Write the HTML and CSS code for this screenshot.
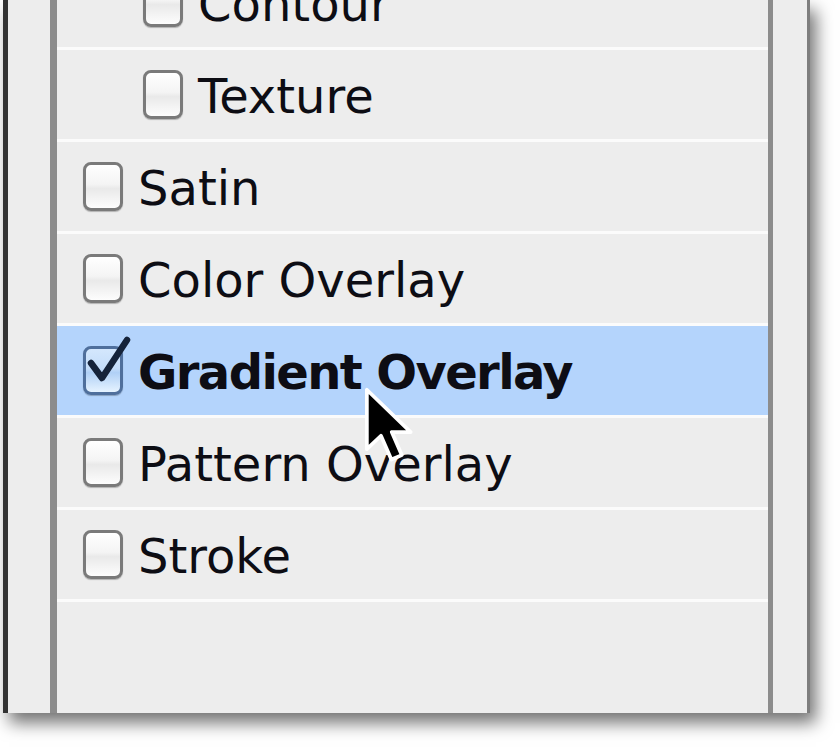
FILE: index.html
```html
<!DOCTYPE html>
<html>
<head>
<meta charset="utf-8">
<link rel="stylesheet" href="styles.css">
</head>
<body>
<div class="window">
  <div class="list">
    <div class="row nested"><span class="cb"></span><span class="label">Contour</span></div>
    <div class="row nested"><span class="cb"></span><span class="label">Texture</span></div>
    <div class="row"><span class="cb"></span><span class="label">Satin</span></div>
    <div class="row"><span class="cb"></span><span class="label">Color Overlay</span></div>
    <div class="row selected">
      <span class="cb checked">
        <svg class="check" width="50" height="50" viewBox="0 0 50 50"><path d="M8 26 L19 41 L44 3" fill="none" stroke="#15233a" stroke-width="6.5" stroke-linecap="round" stroke-linejoin="round"/></svg>
      </span>
      <span class="label bold">Gradient Overlay</span>
    </div>
    <div class="row"><span class="cb"></span><span class="label">Pattern Overlay</span></div>
    <div class="row"><span class="cb"></span><span class="label">Stroke</span></div>
    <div class="row empty"></div>
  </div>
</div>
<svg class="cursor" width="56" height="78" viewBox="0 0 15 21">
  <path d="M1 1 L1 17 L4.8 13.4 L7.6 19.8 L10.4 18.6 L7.7 12.4 L12.8 12.4 Z" fill="#000" stroke="#fff" stroke-width="1" stroke-linejoin="round"/>
</svg>
</body>
</html>
```
FILE: styles.css
```css
html, body {
  margin: 0;
  padding: 0;
  background: #ffffff;
  overflow: hidden;
  width: 840px;
  height: 748px;
}

body {
  position: relative;
  font-family: "DejaVu Sans", "Liberation Sans", sans-serif;
}

.window {
  margin-left: 3px;
  height: 713px;
  box-sizing: content-box;
  display: flex;
  padding: 0 34px 0 42px;
  width: 723px;
  border-left: 5px solid #333333;
  border-right: 3px solid #7e7e7e;
  background: #ededed;
  box-shadow: 6px 10px 16px rgba(0, 0, 0, 0.55);
  overflow: hidden;
}

.list {
  width: 711px;
  margin-top: -45px;
  height: 758px;
  border-left: 7px solid #8c8c8c;
  border-right: 5px solid #8c8c8c;
  background: #ededed;
  display: flex;
  flex-direction: column;
}

.row {
  height: 89px;
  flex: none;
  border-top: 3px solid #fbfbfb;
  display: flex;
  align-items: center;
  gap: 15px;
  padding-left: 26px;
}

.row.nested {
  padding-left: 86px;
}

.row.selected {
  background: #b4d4fc;
}

.row.empty {
  flex: 1;
}

.cb {
  position: relative;
  flex: none;
  width: 34px;
  height: 43px;
  border: 3px solid #7a7a7a;
  border-radius: 8px;
  background: linear-gradient(#ffffff 0%, #f4f4f4 45%, #e9e9e9 55%, #fdfdfd 100%);
  box-shadow: 0 1px 1px rgba(0, 0, 0, 0.25);
}

.cb.checked {
  border-color: #4f6f9c;
  background: linear-gradient(#d4e7fd 0%, #c4ddfa 45%, #b0d0f6 55%, #e6f3ff 100%);
}

.check {
  position: absolute;
  left: -3px;
  top: -12px;
  overflow: visible;
}

.label {
  font-size: 48px;
  color: #0d0d14;
  line-height: 1;
  margin-top: 3px;
}

.label.bold {
  font-weight: bold;
  letter-spacing: -1.6px;
}

.cursor {
  position: absolute;
  left: 363px;
  top: 386px;
}
```
